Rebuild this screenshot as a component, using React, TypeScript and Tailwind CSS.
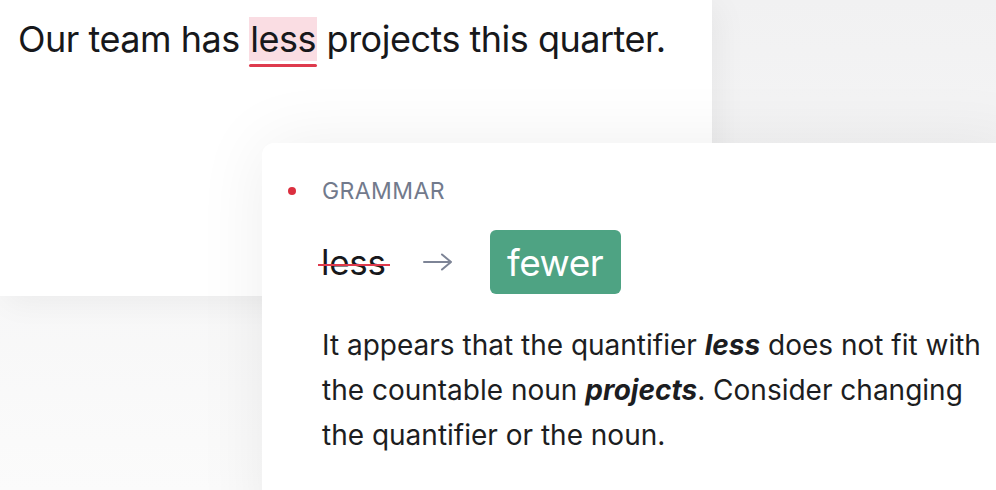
import React from "react";

export default function App() {
  return (
    <div
      className="relative w-[996px] h-[490px] overflow-hidden bg-gradient-to-b from-[#f1f1f2] to-[#fbfbfb]"
      style={{ fontFamily: "Inter, 'Liberation Sans', sans-serif" }}
    >
      <div className="w-[712px] h-[296px] bg-white shadow-[6px_6px_30px_rgba(0,0,0,0.05)] pl-[18px] pt-[13px]">
        <p className="text-[36px] leading-[52px] text-[#17181b] tracking-[-0.5px]">
          Our team has{" "}
          <span className="relative bg-[#fadde3] px-[1px]">
            less
            <span className="absolute left-0 right-0 bottom-[-6px] h-[3px] bg-[#de3a4d] rounded-sm" />
          </span>{" "}
          projects this quarter.
        </p>
      </div>

      <div className="absolute left-[262px] top-[143px] w-[760px] h-[400px] bg-white rounded-tl-[12px] shadow-[0_0_70px_rgba(0,0,0,0.07)] pl-[26px] pt-[33px]">
        <div className="flex items-center gap-[26px]">
          <span className="w-[8px] h-[8px] rounded-full bg-[#db2f3f]" />
          <span className="text-[23px] leading-[30px] tracking-[0.4px] text-[#727a8c]">GRAMMAR</span>
        </div>
        <div className="flex items-center mt-[24px] ml-[33px]">
          <span className="relative text-[35px] text-[#17181b] leading-none tracking-[-0.3px]">
            less
            <span className="absolute left-[-3px] right-[-4px] top-[55%] h-[2px] bg-[#de3a4d]" />
          </span>
          <svg className="ml-[36px]" width="32" height="20" viewBox="0 0 32 20" fill="none">
            <path d="M2 10H29M20 2.5L29 10L20 17.5" stroke="#7d8496" strokeWidth="2" strokeLinecap="round" strokeLinejoin="round" />
          </svg>
          <span className="ml-[36px] h-[64px] w-[131px] flex items-center justify-center rounded-[6px] bg-[#4ea383] text-white text-[37px] leading-none tracking-[-0.5px]">
            fewer
          </span>
        </div>
        <p className="mt-[29px] ml-[34px] text-[28px] leading-[45px] text-[#1c1d21] tracking-[0px] whitespace-nowrap">
          It appears that the quantifier <b className="italic font-bold">less</b> does not fit with
          <br />
          the countable noun <b className="italic font-bold">projects</b>. Consider changing
          <br />
          the quantifier or the noun.
        </p>
      </div>
    </div>
  );
}
